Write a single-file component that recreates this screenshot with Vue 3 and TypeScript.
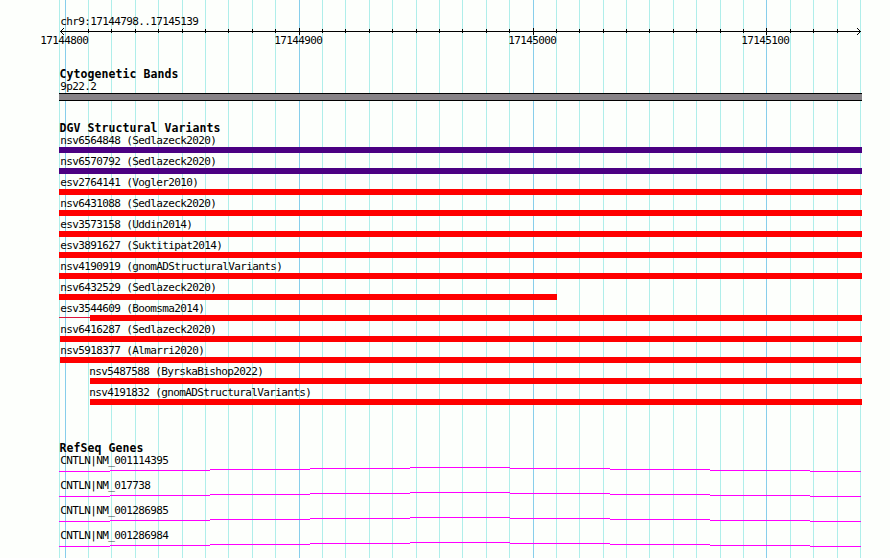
<script setup lang="ts">
interface Variant {
  id: string
  study: string
  start: number
  end: number
  kind: 'loss' | 'mixed'
  outerStart?: number
}

const LEFT = 59
const gridX = [
  59, 65, 88, 111, 135, 158, 182, 205, 228, 252, 275, 299, 322, 345, 369, 392, 416, 439,
  462, 486, 509, 533, 556, 579, 603, 626, 649, 673, 696, 720, 743, 766, 790, 813, 837, 860,
]
const majors = [
  { x: 65, label: '17144800' },
  { x: 299, label: '17144900' },
  { x: 533, label: '17145000' },
  { x: 766, label: '17145100' },
]
const isMajor = (x: number): boolean => majors.some((m) => m.x === x)
const minorTicks = gridX.filter((x) => !isMajor(x) && x > 65 && x < 860)

const variants: Variant[] = [
  { id: 'nsv6564848', study: 'Sedlazeck2020', start: 59, end: 862, kind: 'mixed' },
  { id: 'nsv6570792', study: 'Sedlazeck2020', start: 59, end: 862, kind: 'mixed' },
  { id: 'esv2764141', study: 'Vogler2010', start: 59, end: 862, kind: 'loss' },
  { id: 'nsv6431088', study: 'Sedlazeck2020', start: 59, end: 862, kind: 'loss' },
  { id: 'esv3573158', study: 'Uddin2014', start: 59, end: 862, kind: 'loss' },
  { id: 'esv3891627', study: 'Suktitipat2014', start: 59, end: 862, kind: 'loss' },
  { id: 'nsv4190919', study: 'gnomADStructuralVariants', start: 59, end: 862, kind: 'loss' },
  { id: 'nsv6432529', study: 'Sedlazeck2020', start: 59, end: 557, kind: 'loss' },
  { id: 'esv3544609', study: 'Boomsma2014', start: 90, end: 862, kind: 'loss', outerStart: 59 },
  { id: 'nsv6416287', study: 'Sedlazeck2020', start: 60, end: 862, kind: 'loss' },
  { id: 'nsv5918377', study: 'Almarri2020', start: 60, end: 861, kind: 'loss' },
  { id: 'nsv5487588', study: 'ByrskaBishop2022', start: 90, end: 862, kind: 'loss' },
  { id: 'nsv4191832', study: 'gnomADStructuralVariants', start: 90, end: 862, kind: 'loss' },
]
const labelIndent = (v: Variant): number => (v.outerStart ?? v.start) > 60 ? 30 : 1

const genes = ['NM_001114395', 'NM_017738', 'NM_001286985', 'NM_001286984']

// Intron hat: [start, width, top] of each one-pixel step.
const intron = [
  [0, 51, 4], [51, 100, 3], [151, 100, 2], [251, 100, 1], [351, 100, 0],
  [451, 100, 1], [551, 100, 2], [651, 100, 3], [751, 51, 4],
]
</script>

<template>
  <main class="browser">
    <svg class="grid" width="890" height="558" shape-rendering="crispEdges">
      <rect
        v-for="x in gridX" :key="x" :x="x" y="0" width="1" height="558"
        :class="isMajor(x) ? 'major' : 'minor'"
      />
    </svg>

    <header class="ruler">
      <div class="region text">chr9:17144798..17145139</div>
      <svg class="axis" width="890" height="8" shape-rendering="crispEdges">
        <rect x="60" y="3" width="801" height="1" />
        <rect v-for="x in minorTicks" :key="x" :x="x" y="1" width="1" height="4" />
        <rect v-for="m in majors.slice(1)" :key="m.x" :x="m.x" y="0" width="1" height="7" />
        <path d="M61 2h1v1h-1zM62 1h1v1h-1zM63 0h1v1h-1zM61 4h1v1h-1zM62 5h1v1h-1zM63 6h1v1h-1z" />
        <path d="M859 2h1v1h-1zM858 1h1v1h-1zM857 0h1v1h-1zM859 4h1v1h-1zM858 5h1v1h-1zM857 6h1v1h-1z" />
      </svg>
      <div class="scale">
        <span
          v-for="m in majors" :key="m.x" class="text tick-label"
          :style="{ gridColumnStart: m.x - 24 }"
        >{{ m.label }}</span>
      </div>
    </header>

    <section class="bands">
      <h2>Cytogenetic Bands</h2>
      <div class="text band-name">9p22.2</div>
      <div class="band"></div>
    </section>

    <section class="variants">
      <h2>DGV Structural Variants</h2>
      <div v-for="v in variants" :key="v.id" class="variant">
        <div class="text" :style="{ paddingLeft: labelIndent(v) + 'px' }">{{ v.id }} ({{ v.study }})</div>
        <div class="track" :style="{ paddingLeft: (v.outerStart ?? v.start) - LEFT + 'px' }">
          <i v-if="v.outerStart" class="outer" :style="{ width: v.start - v.outerStart + 'px' }"></i>
          <i class="bar" :class="v.kind" :style="{ width: v.end - v.start + 'px' }"></i>
        </div>
      </div>
    </section>

    <section class="genes">
      <h2>RefSeq Genes</h2>
      <div v-for="g in genes" :key="g" class="gene">
        <div class="text gene-name">CNTLN|{{ g }}</div>
        <svg width="803" height="5" shape-rendering="crispEdges">
          <rect v-for="s in intron" :key="s[0]" :x="s[0]" :y="s[2]" :width="s[1]" height="1" />
        </svg>
      </div>
    </section>
  </main>
</template>

<style>
body {
  margin: 0;
  background: #fdfffc;
}
</style>

<style scoped>
.browser {
  position: relative;
  box-sizing: border-box;
  width: 890px;
  height: 558px;
  overflow: hidden;
  background: #fdfffc;
  color: #000;
  font-family: 'DejaVu Sans Mono', monospace;
}
.grid {
  position: absolute;
  inset: 0;
}
.minor { fill: #afeeea; }
.major { fill: #87ceeb; }
header, section {
  position: relative;
}
section {
  padding-left: 59px;
}
.text {
  height: 12px;
  font-size: 11px;
  line-height: 14px;
  letter-spacing: -0.622px;
  text-indent: 0.3px;
  white-space: pre;
}
h2 {
  margin: 0;
  height: 12px;
  font-size: 11.5px;
  line-height: 12px;
  letter-spacing: 0.077px;
  text-indent: 0.5px;
  font-weight: 700;
  white-space: pre;
}
.ruler {
  height: 68px;
  padding-top: 15px;
  box-sizing: border-box;
}
.region {
  padding-left: 60px;
}
.axis {
  display: block;
  margin-top: 1px;
}
.scale {
  display: grid;
  grid-template-columns: repeat(890, 1px);
  margin-top: -2px;
}
.tick-label {
  grid-row: 1;
  width: 50px;
}
.bands {
  height: 54px;
}
.band-name, .gene-name {
  padding-left: 1px;
}
.band {
  box-sizing: border-box;
  width: 803px;
  height: 8px;
  margin-top: 1px;
  border: solid #000;
  border-width: 1px 0;
  background: #878387;
}
.variants {
  height: 320px;
}
.variant {
  height: 21px;
}
.track {
  display: flex;
  height: 6px;
  margin-top: 1px;
}
.bar {
  height: 6px;
}
.loss { background: #ff0000; }
.mixed { background: #4b0082; }
.outer {
  height: 1px;
  margin-top: 2px;
  background: #dc143c;
}
.gene {
  height: 25px;
}
.gene svg {
  display: block;
  margin-top: 1px;
  fill: #ff00ff;
}
</style>
